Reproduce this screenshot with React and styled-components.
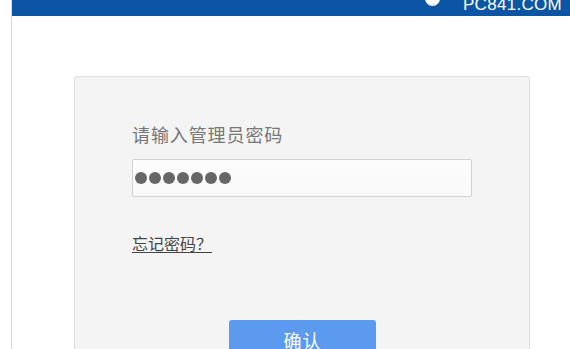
import React from "react";
import styled, { createGlobalStyle } from "styled-components";

const GlobalStyle = createGlobalStyle`
  html, body {
    margin: 0;
    padding: 0;
    background: #fff;
    font-family: "Noto Sans CJK SC", "Liberation Sans", sans-serif;
  }
`;

const Page = styled.div`
  margin-left: 11px;
  height: 349px;
  border-left: 1px solid #dcdcdc;
  overflow: hidden;
`;

const Header = styled.div`
  height: 16px;
  margin-left: -1px;
  background: #0b55a4;
  display: flex;
  justify-content: flex-end;
  align-items: flex-start;
  overflow: hidden;
  padding-right: 8px;
`;

const LogoDot = styled.div`
  width: 15px;
  height: 15px;
  margin-top: -9px;
  border-radius: 50%;
  background: #fff;
`;

const LogoText = styled.div`
  margin: -5px 0 0 23px;
  color: #fff;
  font-family: "Liberation Sans", sans-serif;
  font-size: 17px;
  line-height: 20px;
  letter-spacing: 0.3px;
`;

const Card = styled.div`
  margin: 60px 0 0 62px;
  width: 456px;
  height: 290px;
  background: #f4f4f4;
  border: 1px solid #dedede;
  border-radius: 3px;
  padding: 46px 0 0 57px;
  box-sizing: border-box;
  display: flex;
  flex-direction: column;
  align-items: flex-start;
`;

const Label = styled.div`
  font-size: 18px;
  line-height: 22px;
  color: #777;
  letter-spacing: 0.9px;
`;

const PasswordBox = styled.div`
  margin-top: 14px;
  width: 340px;
  height: 38px;
  box-sizing: border-box;
  border: 1px solid #d2d2d2;
  border-radius: 2px;
  background: linear-gradient(#fcfcfc, #f9f9f9);
  display: flex;
  align-items: center;
  gap: 2px;
  padding-left: 2px;
`;

const Dot = styled.span`
  width: 12px;
  height: 12px;
  border-radius: 50%;
  background: #666;
`;

const Forgot = styled.a`
  margin-top: 36px;
  font-size: 16px;
  line-height: 20px;
  color: #444;
  text-decoration: underline;
  text-underline-offset: 2px;
  cursor: pointer;
`;

const Confirm = styled.button`
  margin: 67px 0 0 97px;
  width: 147px;
  height: 40px;
  flex-shrink: 0;
  border: none;
  border-radius: 3px;
  background: #5c9af0;
  color: #fff;
  font-family: "Noto Sans CJK SC", sans-serif;
  font-size: 18px;
  letter-spacing: 1px;
  padding: 0;
  cursor: pointer;
`;

export default function App() {
  return (
    <>
      <GlobalStyle />
      <Page>
        <Header>
          <LogoDot />
          <LogoText>PC841.COM</LogoText>
        </Header>
        <Card>
          <Label>请输入管理员密码</Label>
          <PasswordBox>
            {Array.from({ length: 7 }).map((_, i) => (
              <Dot key={i} />
            ))}
          </PasswordBox>
          <Forgot>忘记密码？</Forgot>
          <Confirm>确认</Confirm>
        </Card>
      </Page>
    </>
  );
}
